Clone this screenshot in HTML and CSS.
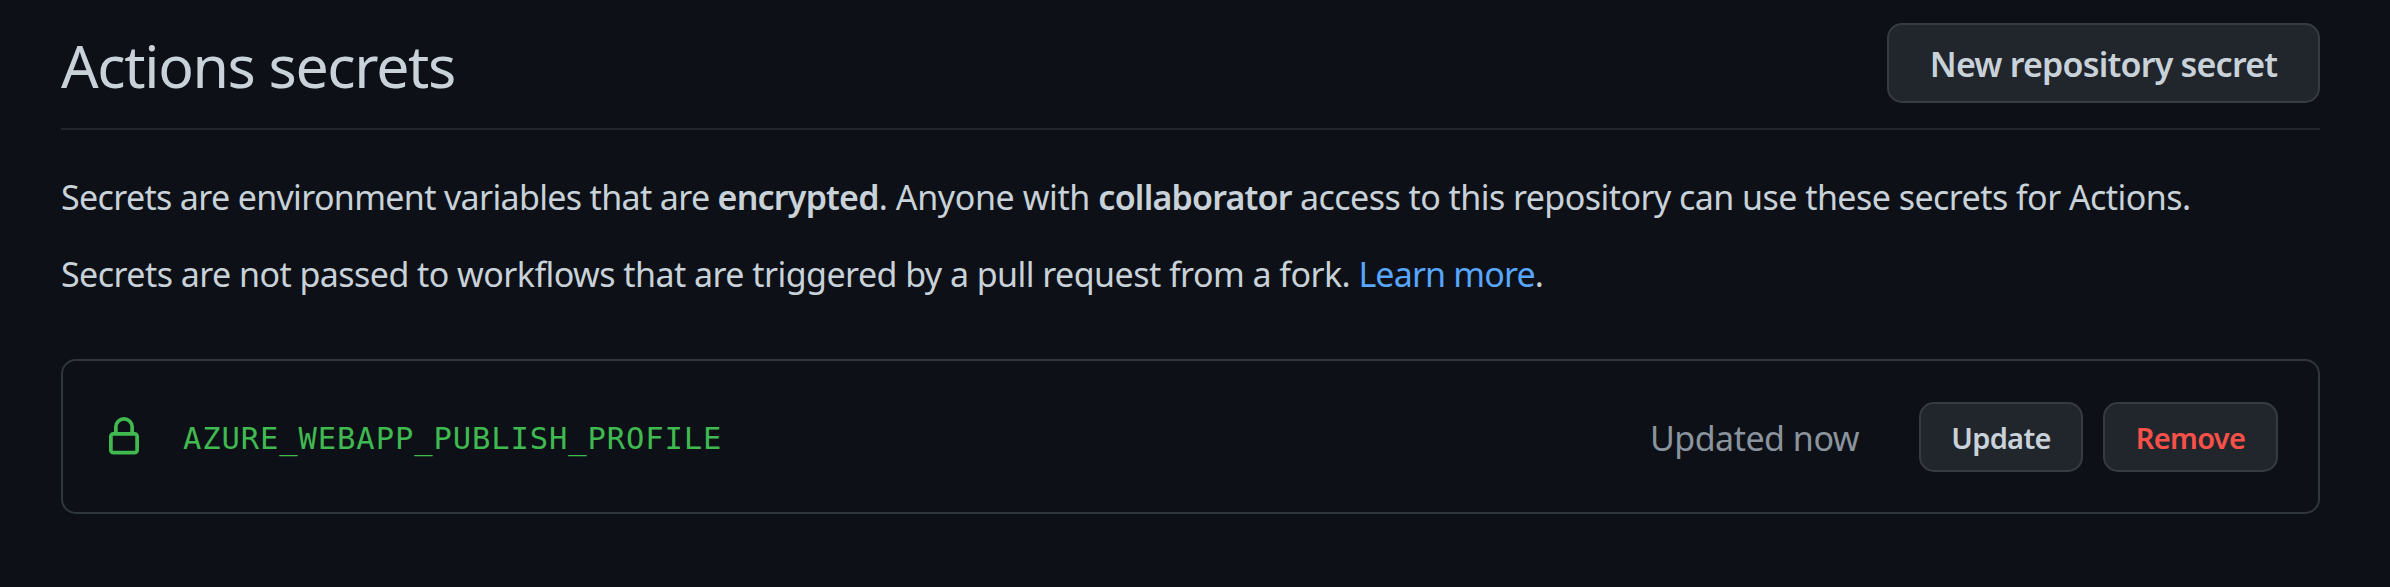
FILE: index.html
```html
<!DOCTYPE html>
<html lang="en">
<head>
<meta charset="utf-8">
<title>Actions secrets</title>
<link rel="stylesheet" href="styles.css">
</head>
<body>
<main class="page">
  <header class="subhead">
    <h1 class="title">Actions secrets</h1>
    <button class="btn btn-large">New repository secret</button>
  </header>
  <p class="note note-first"><span class="lead">Secrets are environment variables that are </span><strong>encrypted</strong><span class="mid">. Anyone with </span><strong>collaborator</strong> access to this repository can use these secrets for Actions.</p>
  <p class="note note-second">Secrets are not passed to workflows that are triggered by a pull request from a fork. <a class="link" href="#">Learn more</a>.</p>
  <section class="box">
    <svg class="lock" viewBox="0 0 16 16" aria-hidden="true"><path fill-rule="evenodd" d="M4 4a4 4 0 018 0v2h.25c.966 0 1.75.784 1.75 1.75v5.5A1.75 1.75 0 0112.25 15h-8.5A1.75 1.75 0 012 13.25v-5.5C2 6.784 2.784 6 3.75 6H4V4zm8.25 3.5h-8.5a.25.25 0 00-.25.25v5.5c0 .138.112.25.25.25h8.5a.25.25 0 00.25-.25v-5.5a.25.25 0 00-.25-.25zM10.5 6V4a2.5 2.5 0 10-5 0v2h5z"/></svg>
    <code class="name">AZURE_WEBAPP_PUBLISH_PROFILE</code>
    <span class="updated">Updated now</span>
    <button class="btn btn-small btn-update">Update</button>
    <button class="btn btn-small btn-remove">Remove</button>
  </section>
</main>
</body>
</html>
```
FILE: styles.css
```css
* { box-sizing: border-box; }
body {
  margin: 0;
  background: #0d1117;
  color: #c9d1d9;
  font-family: "Noto Sans", "Open Sans", sans-serif;
  font-size: 34px;
}
.page { padding: 23px 70px 0 61px; }
.subhead {
  display: flex;
  justify-content: space-between;
  align-items: flex-start;
  height: 107px;
  border-bottom: 2px solid #21262d;
}
.title {
  margin: 2px 0 0;
  font-size: 59px;
  font-weight: 400;
  line-height: 80px;
  letter-spacing: -1.35px;
}
.btn {
  flex: none;
  padding: 0;
  border: 2px solid #363b42;
  border-radius: 15px;
  background: #21262d;
  color: #c9d1d9;
  font-family: inherit;
  font-weight: 600;
  text-align: center;
  white-space: nowrap;
}
.btn-large {
  width: 433px;
  height: 80px;
  padding-top: 2px;
  font-size: 34px;
  line-height: 74px;
  letter-spacing: -0.8px;
}
.note {
  margin: 0;
  line-height: 52px;
  letter-spacing: -0.55px;
  white-space: nowrap;
}
.note-first { margin-top: 41px; }
.note-second { margin-top: 25px; }
.note strong { font-weight: 600; letter-spacing: -0.8px; }
.lead { letter-spacing: -0.66px; }
.mid { letter-spacing: -0.4px; }
.link { color: #58a6ff; text-decoration: none; letter-spacing: -0.85px; }
.box {
  display: flex;
  align-items: center;
  height: 155px;
  margin-top: 59px;
  padding: 0 40px 0 41px;
  border: 2px solid #30363d;
  border-radius: 15px;
}
.lock { width: 40px; height: 40px; fill: #3fb950; }
.name {
  margin-left: 39px;
  padding-top: 4px;
  color: #3fb950;
  font-family: "DejaVu Sans Mono", monospace;
  font-size: 30.5px;
  letter-spacing: 0.9px;
}
.updated {
  margin-left: auto;
  padding-top: 2px;
  color: #8b949e;
  letter-spacing: -0.5px;
}
.btn-small {
  height: 70px;
  padding-top: 1px;
  font-size: 29px;
  line-height: 65px;
  letter-spacing: -0.7px;
}
.btn-update { width: 164px; margin-left: 60px; }
.btn-remove { width: 175px; margin-left: 20px; color: #f85149; }
```
